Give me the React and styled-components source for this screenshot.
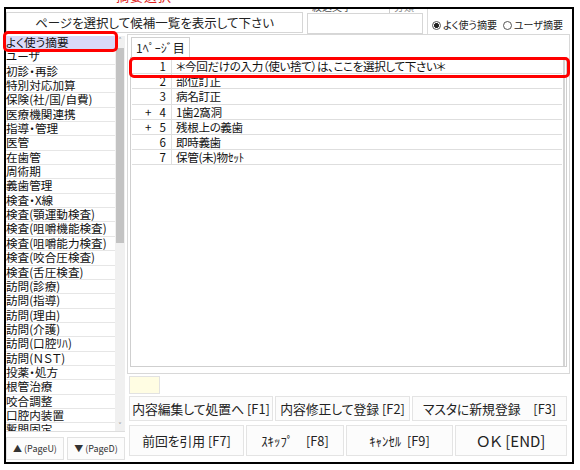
import React from 'react';
import styled, { createGlobalStyle } from 'styled-components';

const CATEGORIES = [
  'よく使う摘要', 'ユーザ', '初診・再診', '特別対応加算', '保険(社/国/自費)', '医療機関連携',
  '指導・管理', '医管', '在歯管', '周術期', '義歯管理', '検査・X線', '検査(顎運動検査)',
  '検査(咀嚼機能検査)', '検査(咀嚼能力検査)', '検査(咬合圧検査)', '検査(舌圧検査)',
  '訪問(診療)', '訪問(指導)', '訪問(理由)', '訪問(介護)', '訪問(口腔ﾘﾊ)', '訪問(ＮＳＴ)',
  '投薬・処方', '根管治療', '咬合調整', '口腔内装置', '暫間固定',
];

const ENTRIES = [
  { no: '1', text: '＊今回だけの入力（使い捨て）は、ここを選択して下さい＊' },
  { no: '2', text: '部位訂正' },
  { no: '3', text: '病名訂正' },
  { no: '+\u2002\u20094', text: '1歯2窩洞' },
  { no: '+\u2002\u20095', text: '残根上の義歯' },
  { no: '6', text: '即時義歯' },
  { no: '7', text: '保管(未)物ｾｯﾄ' },
];

export default function App() {
  return (
    <>
      <GlobalStyle />
      <TopClip><span>摘要選択</span></TopClip>
      <Frame>
        <HeaderRow>
          <PromptBox>ページを選択して候補一覧を表示して下さい</PromptBox>
          <FilterCol>
            <LabelStrip>
              <span>絞込文字</span>
              <span className="kind">分類</span>
            </LabelStrip>
            <InputBox />
          </FilterCol>
          <RadioPanel>
            <Radio checked>よく使う摘要</Radio>
            <Radio>ユーザ摘要</Radio>
          </RadioPanel>
        </HeaderRow>

        <Body>
          <LeftCol>
            <Mark className="left" />
            <ListBox>
              <Items>
                {CATEGORIES.map((name, i) => (
                  <Item key={name} selected={i === 0}>{name}</Item>
                ))}
              </Items>
              <ScrollBar>
                <Arrow>˄</Arrow>
                <Thumb />
                <Spacer />
                <Arrow>˅</Arrow>
              </ScrollBar>
            </ListBox>
            <PageButtons>
              <PageButton type="button">▲ (PageU)</PageButton>
              <PageButton type="button">▼ (PageD)</PageButton>
            </PageButtons>
          </LeftCol>

          <RightCol>
            <Panel>
              <TabRow>
                <Tab>1ﾍﾟｰｼﾞ目</Tab>
              </TabRow>
              <EntryFrame>
                <EntryInner>
                  {ENTRIES.map((e, i) => (
                    <Entry key={e.no}>
                      <span className="no">{e.no}</span>
                      <span className="text">{e.text}</span>
                      {i === 0 && <Mark className="right" />}
                    </Entry>
                  ))}
                </EntryInner>
              </EntryFrame>
            </Panel>

            <ButtonArea>
              <Swatch />
              <ButtonRow cols="144px 135px 1fr" height={25}>
                <Button type="button">内容編集して処置へ [F1]</Button>
                <Button type="button">内容修正して登録 [F2]</Button>
                <Button type="button">マスタに新規登録　[F3]</Button>
              </ButtonRow>
              <ButtonRow cols="115px 98px 107px 1fr" height={31} gap={4}>
                <Button type="button">前回を引用 [F7]</Button>
                <Button type="button">ｽｷｯﾌﾟ　[F8]</Button>
                <Button type="button">ｷｬﾝｾﾙ&nbsp; [F9]</Button>
                <Button type="button" big>ＯＫ [END]</Button>
              </ButtonRow>
            </ButtonArea>
          </RightCol>
        </Body>
      </Frame>
    </>
  );
}

function Radio({ checked, children }) {
  return (
    <RadioLabel>
      <Dot checked={checked} />
      {children}
    </RadioLabel>
  );
}

const GlobalStyle = createGlobalStyle`
  body {
    margin: 0;
    background: #fff;
    color: #111;
    font-family: "Noto Sans CJK JP", "Noto Sans", sans-serif;
    font-feature-settings: "palt";
  }
  * { box-sizing: border-box; }
`;

const TopClip = styled.div`
  height: 7px;
  overflow: hidden;
  padding-left: 116px;

  span {
    display: block;
    margin-top: -11px;
    font-size: 13px;
    line-height: 14px;
    color: #e02020;
    letter-spacing: 1px;
  }
`;

const Frame = styled.div`
  margin-left: 4px;
  width: 570px;
  height: 457px;
  border: 2px solid #000;
  display: flex;
  flex-direction: column;
`;

const HeaderRow = styled.div`
  display: flex;
  height: 25px;
  flex-shrink: 0;
`;

const PromptBox = styled.div`
  width: 297px;
  height: 21px;
  margin-top: 3px;
  border: 1px solid #d6d6d6;
  font-size: 12.5px;
  line-height: 19px;
  text-align: center;
  color: #222;
`;

const FilterCol = styled.div`
  width: 116px;
  margin-left: 4px;
  display: flex;
  flex-direction: column;
`;

const LabelStrip = styled.div`
  height: 4px;
  overflow: hidden;
  display: flex;
  font-size: 10px;
  line-height: 12px;
  color: #555;

  span {
    display: block;
    margin-top: -8px;
    margin-left: 5px;
  }

  .kind {
    margin-left: 37px;
    padding-left: 4px;
    border-left: 1px solid #ccc;
    color: #888;
  }
`;

const InputBox = styled.div`
  height: 21px;
  border: 1px solid #d6d6d6;
  background: #fff;
`;

const RadioPanel = styled.div`
  flex: 1;
  margin-left: 4px;
  border-left: 1px solid #dcdcdc;
  display: flex;
  align-items: flex-end;
  gap: 6px;
  padding: 0 0 2px 4px;
`;

const RadioLabel = styled.span`
  display: inline-flex;
  align-items: center;
  gap: 2px;
  font-size: 10px;
  line-height: 14px;
  color: #222;
  white-space: nowrap;
  flex-shrink: 0;
`;

const Dot = styled.span`
  width: 9px;
  height: 9px;
  border-radius: 50%;
  border: 1px solid #555;
  background: ${p => (p.checked ? 'radial-gradient(circle, #222 0 2.2px, #fff 2.6px)' : '#fff')};
`;

const Body = styled.div`
  flex: 1;
  display: flex;
`;

const LeftCol = styled.div`
  position: relative;
  width: 119px;
  display: flex;
  flex-direction: column;
`;

const ListBox = styled.div`
  height: 398px;
  display: flex;
  padding-top: 2px;
  border-bottom: 1px solid #dedede;
  overflow: hidden;
`;

const Items = styled.div`
  width: 109px;
`;

const Item = styled.div`
  height: 14.35px;
  font-size: 11.6px;
  line-height: 13.5px;
  white-space: nowrap;
  border-bottom: 1px solid #e6e6e6;
  background: ${p => (p.selected ? '#d9d9f8' : '#fff')};
  color: #111;
`;

const Mark = styled.span`
  position: absolute;
  border: 3px solid #f00;
  border-radius: 5px;
  pointer-events: none;
  z-index: 2;

  &.left {
    top: -3px;
    left: -3px;
    width: 115px;
    height: 21px;
  }

  &.right {
    top: -2px;
    left: -3px;
    right: -8px;
    bottom: -5px;
  }
`;

const ScrollBar = styled.div`
  width: 10px;
  background: #f0f0f0;
  display: flex;
  flex-direction: column;
  align-items: center;
`;

const Arrow = styled.span`
  height: 10px;
  font-size: 9px;
  line-height: 10px;
  color: #777;
`;

const Thumb = styled.div`
  width: 8px;
  height: 195px;
  margin-top: 2px;
  background: #c3c3c3;
`;

const Spacer = styled.div`
  flex: 1;
`;

const PageButtons = styled.div`
  display: grid;
  grid-template-columns: 58px 1fr;
  gap: 3px;
  height: 23px;
  margin-top: 5px;
`;

const PageButton = styled.button`
  border: 1px solid #e2e2e2;
  background: #fcfcfc;
  font-family: inherit;
  font-size: 9px;
  color: #333;
  padding: 0;
`;

const RightCol = styled.div`
  width: 443px;
  margin-left: 2px;
  display: flex;
  flex-direction: column;
`;

const Panel = styled.div`
  height: 340px;
  border: 1px solid #d8d8d8;
  display: flex;
  flex-direction: column;
`;

const TabRow = styled.div`
  display: flex;
  padding: 2px 0 0 3px;
`;

const Tab = styled.div`
  height: 20px;
  padding: 0 4px;
  border: 1px solid #cfcfcf;
  border-bottom: none;
  font-size: 12px;
  line-height: 19px;
  color: #222;
`;

const EntryFrame = styled.div`
  height: 310px;
  margin: 0 2px;
  border: 1px solid #cfcfcf;
  padding: 1px 0 0 1px;
`;

const EntryInner = styled.div`
  height: 100%;
  margin-right: 1px;
  border-right: 2px solid #d4d4d4;
  padding-right: 1px;
`;

const Entry = styled.div`
  position: relative;
  display: grid;
  grid-template-columns: 40px 1fr;
  height: 15.2px;
  border-bottom: 1px solid #dedede;
  font-size: 11.6px;
  line-height: 14px;
  color: #111;

  .no {
    text-align: right;
    padding-right: 5px;
    border-right: 1px solid #dedede;
    white-space: pre;
  }

  .text {
    padding-left: 4px;
    white-space: nowrap;
    letter-spacing: -0.4px;
  }
`;

const ButtonArea = styled.div`
  padding: 2px 3px 0 2px;
  display: flex;
  flex-direction: column;
`;

const Swatch = styled.div`
  width: 31px;
  height: 18px;
  background: #fffde3;
  border: 1px solid #e2e2e2;
`;

const ButtonRow = styled.div`
  display: grid;
  grid-template-columns: ${p => p.cols};
  gap: 2px;
  height: ${p => p.height}px;
  margin-top: ${p => p.gap || 2}px;
`;

const Button = styled.button`
  border: 1px solid #e4e4e4;
  background: #fcfcfc;
  font-family: inherit;
  font-feature-settings: "palt";
  font-size: ${p => (p.big ? '15px' : '12.8px')};
  color: #222;
  padding: 0;
  white-space: nowrap;
`;
